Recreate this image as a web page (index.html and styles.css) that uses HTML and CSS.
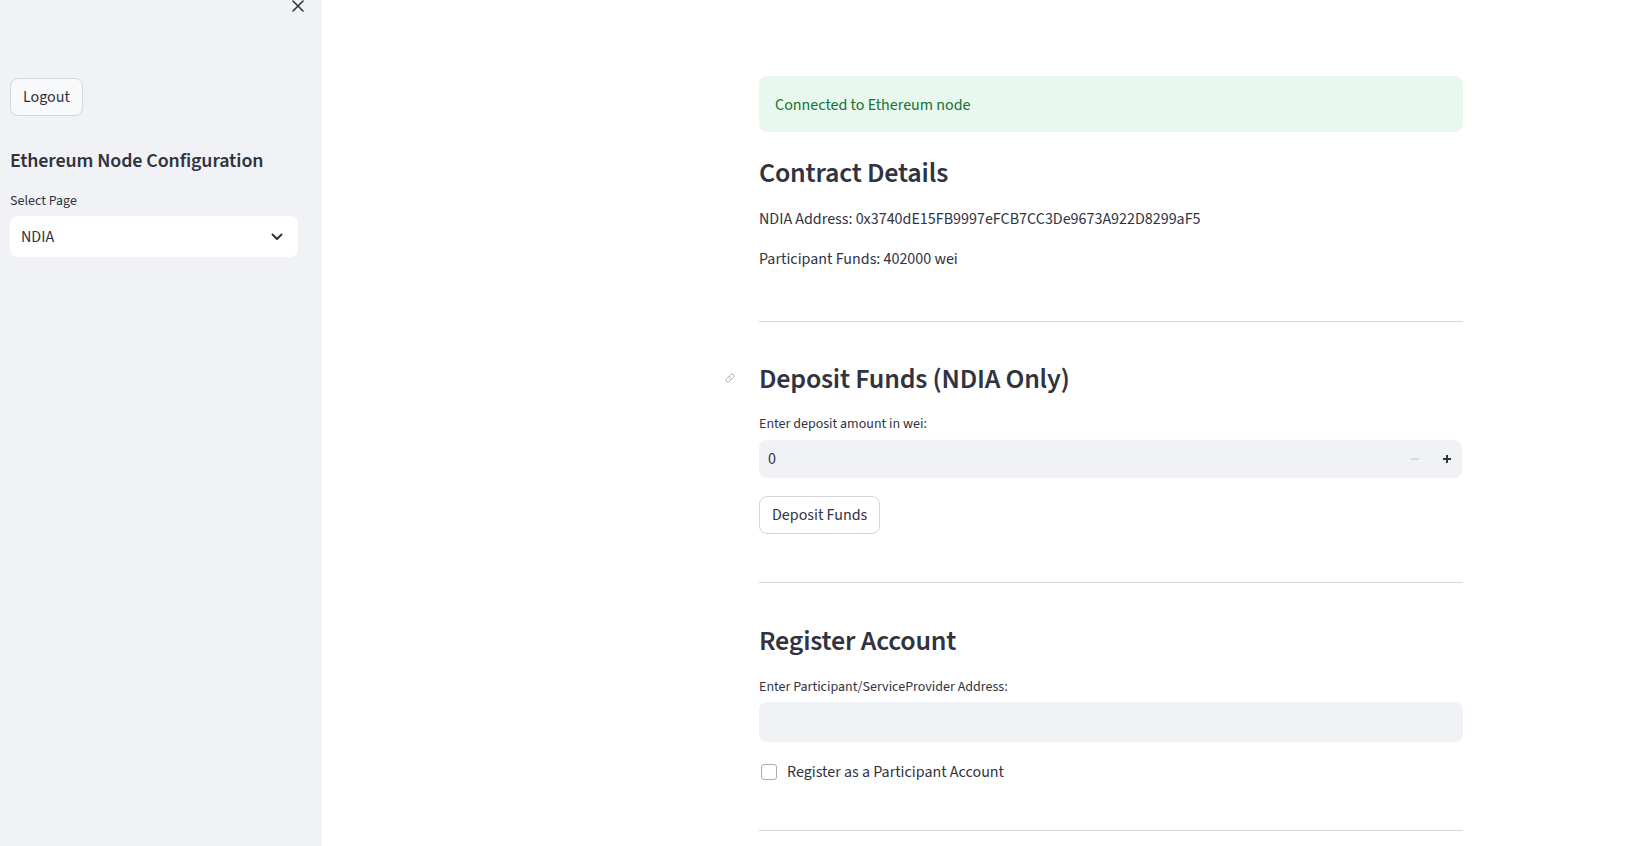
FILE: index.html
```html
<!DOCTYPE html>
<html lang="en">
<head>
<meta charset="utf-8">
<title>NDIA</title>
<link rel="stylesheet" href="styles.css">
</head>
<body>
<div class="app">
  <aside class="sidebar">
    <div class="sidebar-top">
      <button class="close-btn" aria-label="Close sidebar">
        <svg width="12" height="12" viewBox="0 0 12 12"><path d="M1 1 L11 11 M11 1 L1 11" stroke="#31333f" stroke-width="1.6" fill="none" stroke-linecap="round"/></svg>
      </button>
    </div>
    <div class="sidebar-body">
      <button class="btn">Logout</button>
      <h3 class="side-title">Ethereum Node Configuration</h3>
      <div class="field">
        <label class="label">Select Page</label>
        <div class="select">
          <span>NDIA</span>
          <svg width="12" height="8" viewBox="0 0 12 8"><path d="M1.5 1.5 L6 6 L10.5 1.5" stroke="#31333f" stroke-width="2" fill="none" stroke-linecap="round" stroke-linejoin="round"/></svg>
        </div>
      </div>
    </div>
  </aside>
  <main class="main">
    <div class="block">
      <div class="alert">Connected to Ethereum node</div>
      <h2 class="h2 first">Contract Details</h2>
      <p class="text">NDIA Address: 0x3740dE15FB9997eFCB7CC3De9673A922D8299aF5</p>
      <p class="text">Participant Funds: 402000 wei</p>
      <hr class="rule">
      <h2 class="h2 anchored">
        <span class="anchor"><svg width="10" height="10" viewBox="0 0 24 24"><path d="M10 14a5 5 0 0 0 7.07 0l3-3a5 5 0 0 0-7.07-7.07l-1.5 1.5M14 10a5 5 0 0 0-7.07 0l-3 3a5 5 0 0 0 7.07 7.07l1.5-1.5" stroke="#a3a8b4" stroke-width="2.2" fill="none" stroke-linecap="round"/></svg></span>
        Deposit Funds (NDIA Only)
      </h2>
      <div class="field">
        <label class="label">Enter deposit amount in wei:</label>
        <div class="input number">
          <span class="value">0</span>
          <div class="steppers">
            <span class="step minus"><svg width="10" height="10" viewBox="0 0 10 10"><path d="M1 5 H9" stroke="#d0d4dc" stroke-width="1.6"/></svg></span>
            <span class="step plus"><svg width="10" height="10" viewBox="0 0 10 10"><path d="M1 5 H9 M5 1 V9" stroke="#31333f" stroke-width="2"/></svg></span>
          </div>
        </div>
      </div>
      <button class="btn deposit">Deposit Funds</button>
      <hr class="rule second">
      <h2 class="h2">Register Account</h2>
      <div class="field">
        <label class="label">Enter Participant/ServiceProvider Address:</label>
        <div class="input text-input"></div>
      </div>
      <label class="check">
        <span class="box"></span>
        <span>Register as a Participant Account</span>
      </label>
      <hr class="rule third">
    </div>
  </main>
</div>
</body>
</html>
```

FILE: styles.css
```css
* { box-sizing: border-box; }
html, body { margin: 0; padding: 0; height: 100%; }
body {
  font-family: "Source Sans Pro", "Source Sans 3", Lato, "Noto Sans", sans-serif;
  color: #31333f;
  background: #ffffff;
  overflow: hidden;
}
.app { display: flex; height: 846px; }
.sidebar {
  width: 322px;
  flex: 0 0 322px;
  background: #f0f2f6;
  padding: 0 10px;
}
.sidebar-top { display: flex; justify-content: flex-end; height: 78px; }
.close-btn {
  border: 0; background: transparent; padding: 0; margin: 0 8px 0 0;
  width: 12px; height: 12px; display: flex;
}
.btn {
  font-family: inherit;
  font-size: 16px;
  color: #31333f;
  background: #ffffff;
  border: 1px solid #d5d6d9;
  border-radius: 8px;
  padding: 0 12px;
  height: 38px;
  line-height: 36px;
  display: inline-flex; align-items: center;
  white-space: nowrap;
}
.sidebar .btn { background: #f8f9fb; }
.side-title {
  font-size: 20px;
  font-weight: 600;
  margin: 29px 0 0;
  line-height: 32px;
  letter-spacing: -0.1px;
}
.field { display: flex; flex-direction: column; }
.sidebar .field { margin-top: 14px; }
.label { font-size: 14px; line-height: 20px; margin-bottom: 5px; }
.select {
  width: 288px; height: 41px; background: #ffffff; border-radius: 8px;
  display: flex; align-items: center; justify-content: space-between;
  padding: 0 15px 0 11px; font-size: 16px;
}
.main { flex: 1; padding-left: 437px; }
.block { width: 704px; padding-top: 76px; }
.alert {
  background: #e8f8ee;
  color: #177233;
  border-radius: 8px;
  height: 56px;
  padding: 1px 16px 0;
  display: flex; align-items: center;
  font-size: 16px;
}
.h2 {
  font-size: 28px; font-weight: 600; margin: 0; line-height: 40px;
  letter-spacing: -0.2px;
}
.h2.first { margin-top: 21px; }
.text { font-size: 16px; line-height: 24px; margin: 0; }
.h2.first + .text { margin-top: 14px; }
.text + .text { margin-top: 16px; }
.rule { border: 0; border-top: 1px solid #d5d6d9; margin: 50px 0 0; height: 0; }
.anchored { position: relative; margin-top: 37px; }
.anchor { position: absolute; left: -34px; top: 14px; width: 10px; height: 10px; display: flex; }
.h2.anchored + .field { margin-top: 15px; }
.input {
  height: 38px; background: #f0f2f6; border-radius: 8px;
  display: flex; align-items: center;
}
.number { padding: 0 10px 0 9px; justify-content: space-between; margin-right: 1px; }
.h2.anchored + .field .label { margin-bottom: 6px; }
.value { font-size: 16px; }
.steppers { display: flex; gap: 22px; }
.step { display: flex; }
.btn.deposit { margin-top: 18px; align-self: flex-start; }
.block .deposit { display: flex; }
.rule.second { margin-top: 48px; }
.rule.second + .h2 { margin-top: 38px; }
.rule.second + .h2 + .field { margin-top: 16px; }
.text-input { height: 40px; }
.check { display: flex; align-items: center; margin-top: 22px; font-size: 16px; height: 16px; }
.box {
  width: 16px; height: 16px; border: 1px solid #a9acb4; border-radius: 3px;
  background: #fff; margin: 0 10px 0 2px;
}
.rule.third { margin-top: 50px; }
```
